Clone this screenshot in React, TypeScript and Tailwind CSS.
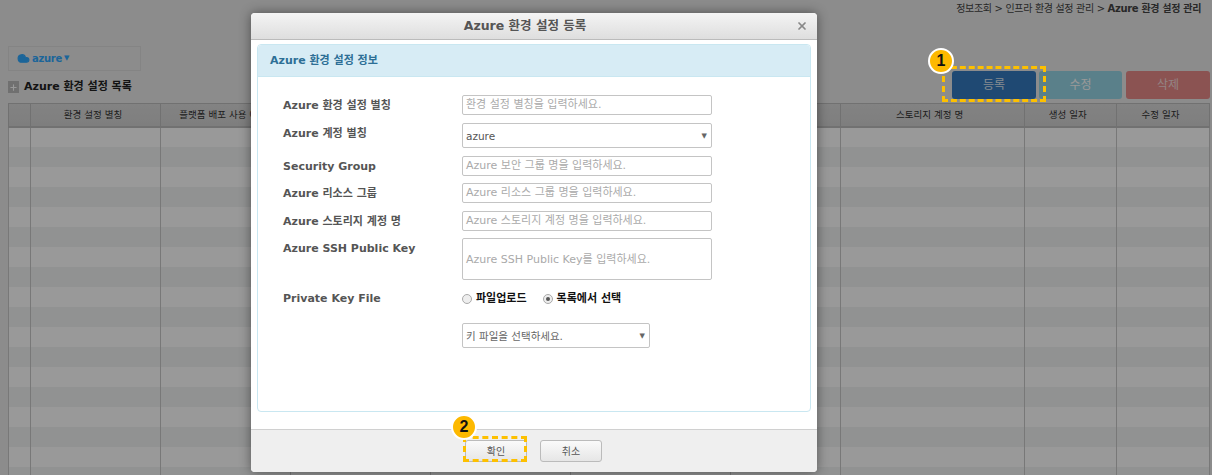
import { Cloud, Plus, X } from 'lucide-react';

const font = 'font-["DejaVu_Sans","Noto_Sans_CJK_KR",sans-serif]';

const columns = [
  { label: '', width: 'w-[22px]' },
  { label: '환경 설정 별칭', width: 'w-[130px]' },
  { label: '플랫폼 배포 사용 여부', width: 'w-[130px]' },
  { label: '', width: 'w-[140px]' },
  { label: '', width: 'w-[140px]' },
  { label: '', width: 'w-[159px]' },
  { label: '', width: 'w-[110px]' },
  { label: '스토리지 계정 명', width: 'w-[184px]' },
  { label: '생성 일자', width: 'w-[92px]' },
  { label: '수정 일자', width: 'w-[93px]' },
];

const rows = Array.from({ length: 18 }, (_, i) => i);

function Badge({ n }: { n: number }) {
  return (
    <span className='flex h-[26px] w-[26px] items-center justify-center rounded-full border-2 border-white bg-[#fdb900] font-["Liberation_Sans",sans-serif] text-[16px] font-bold text-[#111]'>
      {n}
    </span>
  );
}

function Field({ label, children, className = '' }: { label: string; children: React.ReactNode; className?: string }) {
  return (
    <div className={`flex ${className}`}>
      <label className="h-[20px] w-[179px] shrink-0 pt-[2px] text-[11px] leading-[18px] font-bold text-[#555]">{label}</label>
      {children}
    </div>
  );
}

function TextInput({ placeholder }: { placeholder: string }) {
  return (
    <div className="flex h-[20px] w-[250px] items-center rounded-[2px] border border-[#c4c4c4] px-[3px] pt-[1px] text-[11px] text-[#aaa]">
      {placeholder}
    </div>
  );
}

function SelectBox({ value, width, color }: { value: string; width: string; color: string }) {
  return (
    <div className={`flex h-[25px] items-center justify-between rounded-[2px] border border-[#c4c4c4] pt-[2px] pr-[4px] pl-[3px] text-[10.5px] ${width} ${color}`}>
      <span>{value}</span>
      <span className="text-[7px] text-[#666]">▼</span>
    </div>
  );
}

function Radio({ checked }: { checked?: boolean }) {
  return (
    <span className="flex h-[10px] w-[10px] items-center justify-center rounded-full border border-[#aaa] bg-[#eee]">
      {checked && <span className="h-[4px] w-[4px] rounded-full bg-[#555]" />}
    </span>
  );
}

export default function App() {
  return (
    <div className={`relative h-[475px] w-[1212px] overflow-hidden bg-[#e9e9e9] ${font}`}>
      {/* 배경 페이지 */}
      <div className="pt-[2px] pr-[11px] text-right text-[10px] leading-[13px] tracking-[-0.33px] text-[#444]">
        정보조회 &gt; 인프라 환경 설정 관리 &gt; <b>Azure 환경 설정 관리</b>
      </div>

      <div className="mt-[31px] flex h-[57px] justify-between pr-[2px] pl-[8px]">
        <div>
          <div className="flex h-[25px] w-[133px] items-center gap-[2px] border border-[#dcdcdc] pl-[8px] text-[10px] font-bold tracking-[-0.3px] text-[#2fa8ff]">
            <Cloud size={13} fill="currentColor" />
            <span>azure</span>
            <span className="text-[7px]">▼</span>
          </div>
          <div className="mt-[8px] flex items-center gap-[5px]">
            <span className="flex h-[12px] w-[11px] items-center justify-center bg-[#bbb] text-white">
              <Plus size={9} strokeWidth={3} />
            </span>
            <span className="text-[11px] font-bold text-[#222]">Azure 환경 설정 목록</span>
          </div>
        </div>
        <div className="mt-[25px] flex h-[28px] gap-[3px] text-[12px]">
          <button className="w-[84px] rounded-[3px] bg-[#347bc0] text-[#dfe8f0]">등록</button>
          <button className="w-[83px] rounded-[3px] bg-[#96d6e6] text-white">수정</button>
          <button className="ml-[1px] w-[84px] rounded-[3px] bg-[#e88a89] text-[#f6dcdc]">삭제</button>
        </div>
      </div>

      <table className="ml-[8px] w-[1202px] table-fixed border-collapse">
        <thead>
          <tr className="h-[23px] bg-gradient-to-b from-[#dadada] to-[#d2d2d2]">
            {columns.map((col, i) => (
              <th key={i} className={`${col.width} overflow-hidden border border-b-[2px] border-[#bdbdbd] pr-[5px] text-[9.5px] font-normal whitespace-nowrap text-[#333]`}>
                {col.label}
              </th>
            ))}
          </tr>
        </thead>
        <tbody>
          {rows.map((r) => (
            <tr key={r} className={`h-[20px] ${r % 2 === 0 ? 'bg-white' : 'bg-[#f2f3f4]'}`}>
              {columns.map((_, i) => (
                <td key={i} className="border-x border-[#c8c8c8]" />
              ))}
            </tr>
          ))}
        </tbody>
      </table>

      {/* 모달 오버레이 */}
      <div className="absolute inset-0 bg-black/40" />

      <div className="absolute top-[66px] left-[942px] h-[36px] w-[104px] border-[3px] border-dashed border-[#fdc000]" />
      <div className="absolute top-[48px] left-[928px]">
        <Badge n={1} />
      </div>

      <div className="absolute top-[13px] left-[251px] flex h-[459px] w-[566px] flex-col rounded-[4px] bg-white shadow-[0_0_12px_rgba(0,0,0,0.45)]">
        <div className="relative flex h-[27px] shrink-0 items-center justify-center rounded-t-[4px] border-b border-[#bbb] bg-gradient-to-b from-[#f4f4f4] to-[#dedede] pr-[18px] text-[12.5px] font-bold text-[#555]">
          Azure 환경 설정 등록
          <X size={12} strokeWidth={3.5} className="absolute top-[7px] right-[9px] text-[#888]" />
        </div>

        <div className="mx-[6px] mt-[4px] h-[368px] rounded-[4px] border border-[#c9e7f1]">
          <div className="flex h-[32px] items-center rounded-t-[4px] border-b border-[#c9e7f1] bg-[#d7ecf5] pt-[1px] pl-[12px] text-[11px] font-bold text-[#2d6f96]">
            Azure 환경 설정 정보
          </div>
          <div className="pt-[18px] pl-[25px]">
            <Field label="Azure 환경 설정 별칭">
              <TextInput placeholder="환경 설정 별칭을 입력하세요." />
            </Field>
            <Field label="Azure 계정 별칭" className="mt-[8px]">
              <SelectBox value="azure" width="w-[250px]" color="text-[#555]" />
            </Field>
            <Field label="Security Group" className="mt-[8px]">
              <TextInput placeholder="Azure 보안 그룹 명을 입력하세요." />
            </Field>
            <Field label="Azure 리소스 그룹" className="mt-[7px]">
              <TextInput placeholder="Azure 리소스 그룹 명을 입력하세요." />
            </Field>
            <Field label="Azure 스토리지 계정 명" className="mt-[8px]">
              <TextInput placeholder="Azure 스토리지 계정 명을 입력하세요." />
            </Field>
            <Field label="Azure SSH Public Key" className="mt-[7px]">
              <div className="flex h-[42px] w-[250px] items-center rounded-[2px] border border-[#c4c4c4] px-[3px] pt-[2px] text-[11px] text-[#aaa]">
                Azure SSH Public Key를 입력하세요.
              </div>
            </Field>
            <Field label="Private Key File" className="mt-[8px]">
              <div className="flex h-[20px] items-center pt-[2px] text-[11px] font-bold text-[#111]">
                <Radio />
                <span className="ml-[4px]">파일업로드</span>
                <span className="ml-[16px]"><Radio checked /></span>
                <span className="ml-[4px]">목록에서 선택</span>
              </div>
            </Field>
            <div className="mt-[15px] pl-[179px]">
              <SelectBox value="키 파일을 선택하세요." width="w-[188px]" color="text-[#666]" />
            </div>
          </div>
        </div>

        <div className="mt-[17px] flex flex-1 items-start justify-center gap-[13px] rounded-b-[4px] border-t border-[#d0d0d0] bg-[#efefef] pt-[10px] pr-[1px]">
          <button className="h-[22px] w-[62px] rounded-[3px] border border-[#bbb] bg-gradient-to-b from-[#fafafa] to-[#e6e6e6] text-[10px] text-[#555]">확인</button>
          <button className="h-[22px] w-[62px] rounded-[3px] border border-[#bbb] bg-gradient-to-b from-[#fafafa] to-[#e6e6e6] text-[10px] text-[#555]">취소</button>
        </div>
      </div>

      <div className="absolute top-[436px] left-[463px] h-[26px] w-[64px] border-[3px] border-dashed border-[#fdc000]" />
      <div className="absolute top-[414px] left-[451px]">
        <Badge n={2} />
      </div>
    </div>
  );
}
